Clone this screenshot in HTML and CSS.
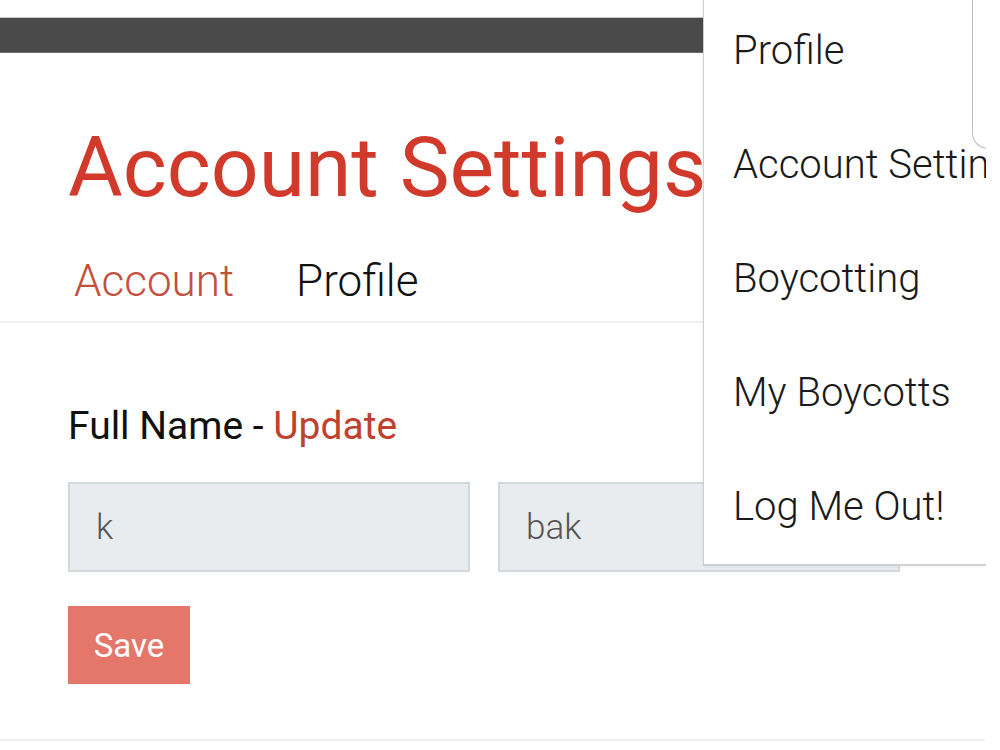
FILE: index.html
```html
<!DOCTYPE html>
<html>
<head>
<meta charset="utf-8">
<link rel="stylesheet" href="styles.css">
</head>
<body>
<div class="page">
  <div class="topbar"></div>
  <main class="content">
    <h1 class="title">Account Settings</h1>
    <nav class="tabs">
      <span class="tab active">Account</span>
      <span class="tab">Profile</span>
    </nav>
    <section class="form">
      <div class="label">Full Name - <span class="update">Update</span></div>
      <div class="fields">
        <div class="field">k</div>
        <div class="field">bak</div>
      </div>
      <button class="save">Save</button>
    </section>
    <div class="endline"></div>
  </main>
  <div class="menu">
    <div class="menu-edge"></div>
    <div class="menu-item">Profile</div>
    <div class="menu-item">Account Settings</div>
    <div class="menu-item">Boycotting</div>
    <div class="menu-item">My Boycotts</div>
    <div class="menu-item">Log Me Out!</div>
  </div>
</div>
</body>
</html>
```

FILE: styles.css
```css
html, body {
  margin: 0;
  padding: 0;
  background: #ffffff;
}
.page {
  position: relative;
  width: 1000px;
  height: 750px;
  overflow: hidden;
  font-family: Roboto, "Liberation Sans", sans-serif;
}
.topbar {
  margin-top: 17px;
  width: 985px;
  height: 34px;
  background: #4a4a4a;
  border-top: 1px solid #c4c4c4;
  border-bottom: 1px solid #707070;
}
.content {
  width: 985px;
  display: flex;
  flex-direction: column;
}
.title {
  margin: 71px 0 0 68px;
  font-size: 84px;
  line-height: 88px;
  font-weight: 400;
  color: #d13a2a;
  white-space: nowrap;
}
.tabs {
  display: flex;
  gap: 62px;
  margin-top: 47px;
  padding: 0 0 18px 74px;
  border-bottom: 2px solid #f0f0f0;
}
.tab {
  font-size: 44px;
  line-height: 44px;
  font-weight: 300;
  color: #111;
}
.tab.active {
  color: #c2503e;
}
.form {
  display: flex;
  flex-direction: column;
  align-items: flex-start;
  padding-left: 68px;
}
.label {
  margin-top: 85px;
  font-size: 39px;
  line-height: 37px;
  color: #111;
}
.update {
  color: #c0412f;
}
.fields {
  display: flex;
  gap: 28px;
  margin-top: 37px;
}
.field {
  box-sizing: border-box;
  width: 402px;
  height: 90px;
  background: #e8ecee;
  border: 2px solid #d3d8db;
  padding-left: 26px;
  display: flex;
  align-items: center;
  font-size: 35px;
  font-weight: 300;
  color: #555;
}
.save {
  margin-top: 34px;
  width: 122px;
  height: 78px;
  border: none;
  background: #e5776a;
  color: #fff;
  font-family: Roboto, "Liberation Sans", sans-serif;
  font-size: 33px;
  padding: 0;
}
.endline {
  margin-top: 55px;
  height: 2px;
  background: #f0f0f0;
}
.menu {
  position: absolute;
  top: -6px;
  left: 703px;
  width: 282px;
  background: #fff;
  border-left: 1px solid #cfcfcf;
  border-bottom: 2px solid #d0d0d0;
  overflow: hidden;
  box-shadow: -1px 1px 2px rgba(0,0,0,0.05);
}
.menu-edge {
  position: absolute;
  left: 268px;
  top: -20px;
  width: 30px;
  height: 174px;
  border-left: 1.5px solid #bdbdbd;
  border-bottom: 1.5px solid #bdbdbd;
  border-bottom-left-radius: 16px;
}
.menu-item {
  height: 114px;
  line-height: 114px;
  padding-left: 29px;
  font-size: 40px;
  font-weight: 300;
  color: #1a1a1a;
  white-space: nowrap;
}
```
